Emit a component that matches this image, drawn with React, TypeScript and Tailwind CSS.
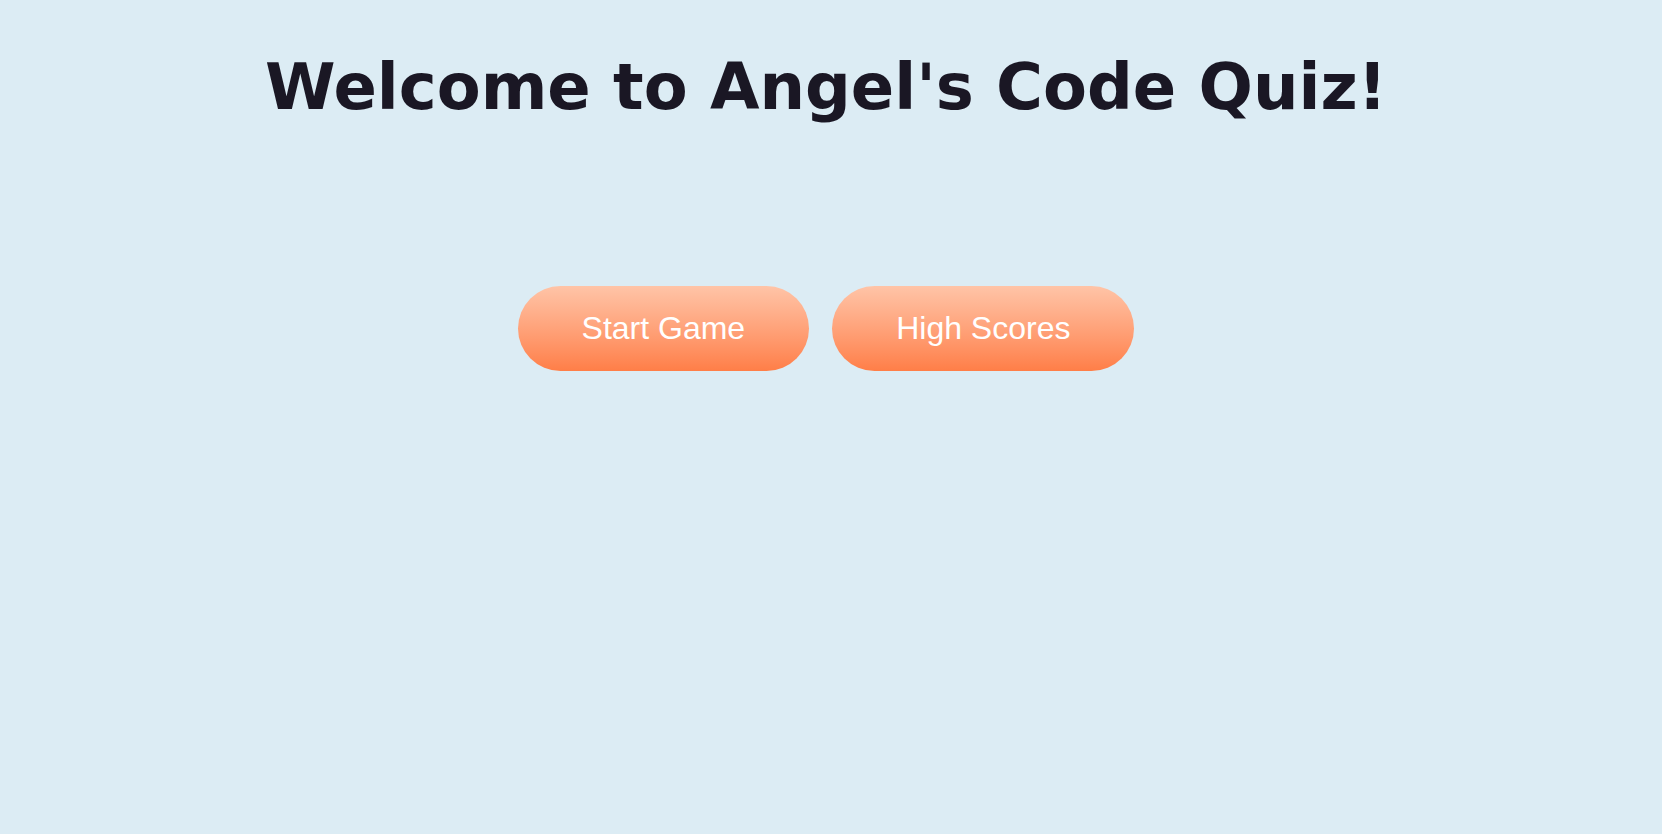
import React from 'react';

const App: React.FC = () => {
  return (
    <div className="min-h-screen bg-[#dcecf4] flex flex-col items-center pr-[10px]">
      {/* Title */}
      <h1 className="mt-[49px] text-[64px] leading-[1.2] font-bold text-[#1a1724] font-['DejaVu_Sans',sans-serif]">
        Welcome to Angel's Code Quiz!
      </h1>

      {/* Menu buttons */}
      <div className="mt-[160px] flex items-center gap-[23px] font-['Liberation_Sans',Arial,sans-serif]">
        <button className="h-[85px] px-16 rounded-full bg-gradient-to-b from-[#ffc4a7] to-[#ff7e47] text-white text-[32px]">
          Start Game
        </button>
        <button className="h-[85px] px-16 rounded-full bg-gradient-to-b from-[#ffc4a7] to-[#ff7e47] text-white text-[32px]">
          High Scores
        </button>
      </div>
    </div>
  );
};

export default App;
